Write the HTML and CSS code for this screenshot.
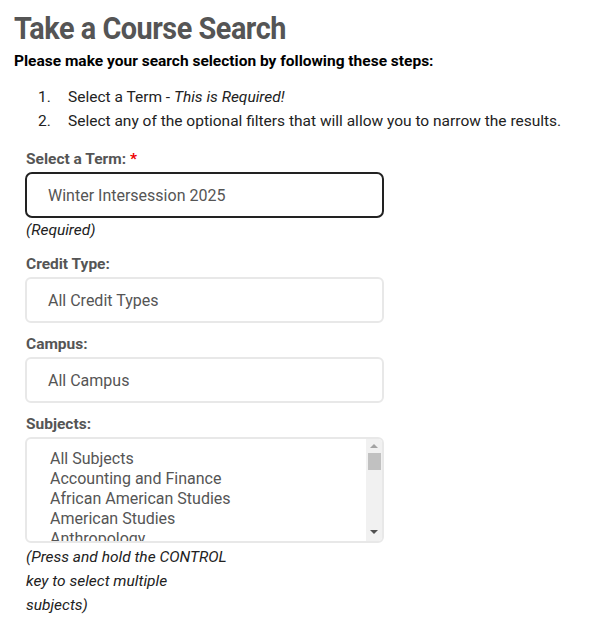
FILE: index.html
```html
<!DOCTYPE html>
<html>
<head>
<meta charset="utf-8">
<link rel="stylesheet" href="styles.css">
</head>
<body>
<div class="page">
  <h1 class="title"><span class="title-text">Take a Course Search</span></h1>
  <p class="intro">Please make your search selection by following these steps:</p>
  <ol class="steps">
    <li><span class="num">1.</span><span>Select a Term - <em>This is Required!</em></span></li>
    <li><span class="num">2.</span><span>Select any of the optional filters that will allow you to narrow the results.</span></li>
  </ol>
  <div class="form">
    <div class="field">
      <div class="label">Select a Term: <span class="req">*</span></div>
      <div class="select active">Winter Intersession 2025</div>
      <div class="hint first">(Required)</div>
    </div>
    <div class="field">
      <div class="label">Credit Type:</div>
      <div class="select">All Credit Types</div>
    </div>
    <div class="field">
      <div class="label">Campus:</div>
      <div class="select">All Campus</div>
    </div>
    <div class="field">
      <div class="label">Subjects:</div>
      <div class="listbox">
        <div class="options">
          <div class="opt">All Subjects</div>
          <div class="opt">Accounting and Finance</div>
          <div class="opt">African American Studies</div>
          <div class="opt">American Studies</div>
          <div class="opt">Anthropology</div>
        </div>
        <div class="scrollbar">
          <div class="arrow up"></div>
          <div class="thumb"></div>
          <div class="track"></div>
          <div class="arrow down"></div>
        </div>
      </div>
      <div class="hint narrow">(Press and hold the CONTROL key to select multiple subjects)</div>
    </div>
  </div>
</div>
</body>
</html>
```
FILE: styles.css
```css
* { box-sizing: border-box; }
body {
  margin: 0;
  font-family: Roboto, "Liberation Sans", sans-serif;
  color: #222;
  background: #fff;
}
.page {
  padding: 8px 14px 0 14px;
}
.title {
  margin: 0;
  font-size: 32px;
  font-weight: 700;
  color: #555;
  line-height: 40px;
  letter-spacing: -0.5px;
}
.title-text {
  display: inline-block;
  transform: scaleX(0.9);
  transform-origin: left center;
}
.intro {
  margin: 3px 0 0 0;
  font-size: 15.5px;
  font-weight: 700;
  color: #000;
  line-height: 20px;
}
.steps {
  list-style: none;
  margin: 14px 0 0 0;
  padding: 0 0 0 24px;
  font-size: 15.5px;
  color: #222;
  line-height: 24px;
}
.steps li { display: flex; }
.steps .num { width: 30px; }
.form {
  padding-left: 11px;
  margin-top: 16px;
  display: flex;
  flex-direction: column;
  gap: 11px;
}
.field { display: flex; flex-direction: column; }
.label {
  font-size: 15.5px;
  font-weight: 700;
  color: #555;
  line-height: 20px;
  margin-bottom: 3px;
  margin-left: 1px;
}
.req { color: #e00; }
.select {
  width: 359px;
  height: 46px;
  flex: none;
  border: 2px solid #e8e8e8;
  border-radius: 6px;
  padding: 0 0 0 21px;
  font-size: 16px;
  color: #555;
  display: flex;
  align-items: center;
}
.select.active {
  border-color: #222;
  border-radius: 7px;
}
.hint {
  font-size: 15.5px;
  font-style: italic;
  color: #222;
  line-height: 24px;
  margin-left: 1px;
}
.hint.first { margin-bottom: 1px; }
.hint.narrow { width: 204px; margin-top: 2px; }
.listbox {
  width: 359px;
  height: 106px;
  flex: none;
  border: 2px solid #e8e8e8;
  border-radius: 6px;
  display: flex;
  overflow: hidden;
}
.options {
  flex: 1;
  padding: 10px 0 0 23px;
  overflow: hidden;
  font-size: 16px;
  color: #555;
  line-height: 20px;
}
.scrollbar {
  width: 16px;
  background: #f1f1f1;
  display: flex;
  flex-direction: column;
  align-items: center;
}
.arrow {
  width: 0; height: 0;
  border-left: 4px solid transparent;
  border-right: 4px solid transparent;
  margin: 5px 0;
}
.arrow.up { border-bottom: 4px solid #a3a3a3; }
.arrow.down { border-top: 4px solid #505050; margin-bottom: 7px; }
.thumb {
  width: 13px;
  height: 17px;
  background: #c1c1c1;
}
.track { flex: 1; }
```
